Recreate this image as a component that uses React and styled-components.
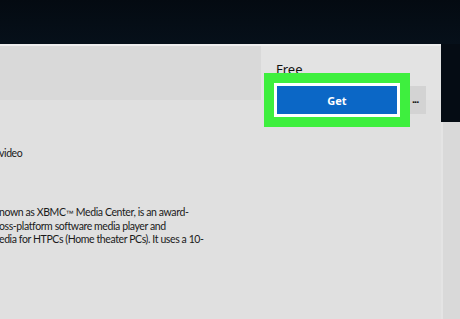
import styled, { createGlobalStyle } from "styled-components";

const GlobalStyle = createGlobalStyle`
  html, body {
    margin: 0;
    padding: 0;
    background: #050c14;
  }
  body {
    font-family: "Noto Sans", "Open Sans", sans-serif;
  }
`;

const App = () => {
  return (
    <Page>
      <GlobalStyle />
      <Sky />
      <Stage>
        <StoreWindow>
          <MainColumn>
            <Banner />
            <Description>
              <Teaser>video</Teaser>
              {/* the paragraph is cut by the left edge of the shot */}
              <Paragraph>
                <Line>
                  nown as XBMC<Mark>™</Mark> Media Center, is an award-
                </Line>
                <Line>oss-platform software media player and</Line>
                <Line>edia for HTPCs (Home theater PCs). It uses a 10-</Line>
              </Paragraph>
            </Description>
          </MainColumn>
          <Aside>
            <PriceLabel>Free</PriceLabel>
            <ActionRow>
              <Highlight>
                <GetButton type="button">Get</GetButton>
              </Highlight>
              <MoreButton type="button">...</MoreButton>
            </ActionRow>
          </Aside>
        </StoreWindow>
        <Gutter>
          <GutterDark />
          <GutterTrack />
        </Gutter>
      </Stage>
    </Page>
  );
};

const Page = styled.div`
  width: 460px;
  height: 319px;
  overflow: hidden;
  display: flex;
  flex-direction: column;
  background: #050c14;
`;

const Sky = styled.div`
  height: 44px;
  flex: none;
  background: linear-gradient(180deg, #040a11 0%, #06101a 100%);
`;

const Stage = styled.div`
  flex: 1;
  display: flex;
`;

const StoreWindow = styled.section`
  width: 441px;
  flex: none;
  display: flex;
  border-top: 2px solid #eeeeee;
  background: #e0e0e0;
`;

const MainColumn = styled.div`
  width: 261px;
  flex: none;
`;

const Banner = styled.div`
  height: 54px;
  background: #d9d9d9;
`;

const Description = styled.div`
  padding-top: 47px;
  font-family: Lato, "Noto Sans", sans-serif;
  font-size: 10.5px;
  letter-spacing: -0.4px;
  line-height: 13px;
  color: #1a1a1a;
  white-space: nowrap;
  overflow: hidden;
`;

const Teaser = styled.div`
  margin-left: -1px;
`;

const Paragraph = styled.div`
  margin-top: 46px;
`;

const Line = styled.div`
  margin-left: -1px;
`;

const Mark = styled.span`
  font-family: "Liberation Sans", sans-serif;
  font-size: 8px;
  letter-spacing: 0;
`;

const Aside = styled.div`
  flex: 1;
  padding: 15px 0 0 3px;
  background: linear-gradient(180deg, #e3e3e3 0, #e3e3e3 54px, #e0e0e0 54px);
`;

const PriceLabel = styled.div`
  margin-left: 12px;
  font-size: 13px;
  line-height: 16px;
  color: #111111;
`;

const ActionRow = styled.div`
  display: flex;
  align-items: center;
  margin-top: -4px;
`;

const Highlight = styled.div`
  padding: 10px;
  background: #3eef3e;
`;

const GetButton = styled.button`
  display: block;
  width: 126px;
  height: 34px;
  margin: 0;
  padding: 0;
  border: 3px solid #ffffff;
  background: #0b67c6;
  color: #ffffff;
  font-family: "Noto Sans", "Open Sans", sans-serif;
  font-size: 11px;
  font-weight: 700;
  cursor: pointer;
`;

const MoreButton = styled.button`
  width: 16px;
  height: 28px;
  margin: 0;
  padding: 0 0 4px 2px;
  border: none;
  background: #d3d3d3;
  color: #111111;
  font-family: "Noto Sans", sans-serif;
  font-size: 11px;
  font-weight: 700;
  text-align: left;
  letter-spacing: -1px;
`;

const Gutter = styled.div`
  flex: 1;
  display: flex;
  flex-direction: column;
`;

const GutterDark = styled.div`
  height: 78px;
  background: #050c14;
`;

const GutterTrack = styled.div`
  flex: 1;
  border-left: 2px solid #e4e4e4;
  background: #d9d9d9;
`;

export default App;
